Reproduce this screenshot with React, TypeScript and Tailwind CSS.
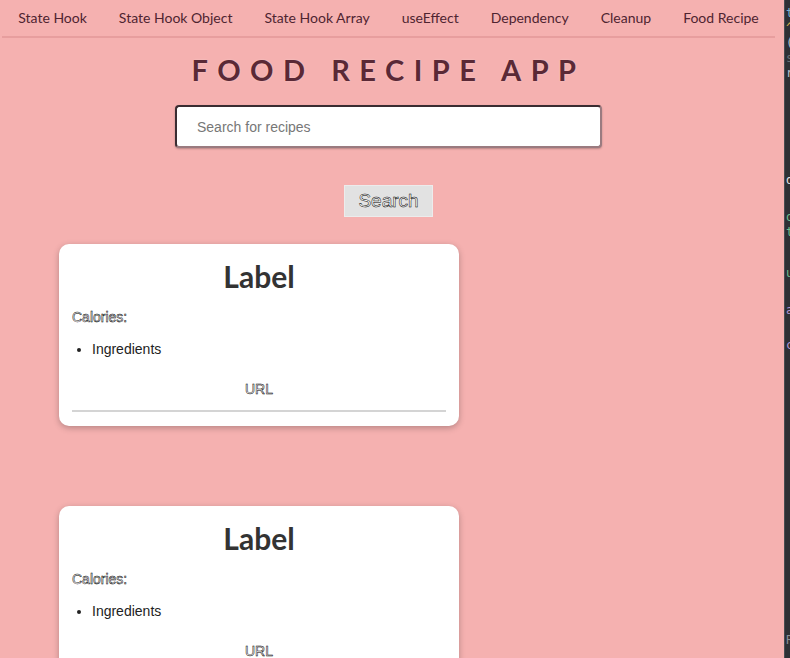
import React from "react";

const navLinks = [
  "State Hook",
  "State Hook Object",
  "State Hook Array",
  "useEffect",
  "Dependency",
  "Cleanup",
  "Food Recipe",
];

const outlined = "text-white [-webkit-text-stroke:0.5px_#000]";

function RecipeCard() {
  return (
    <div className="w-[400px] bg-white rounded-[10px] shadow-[0_2px_6px_rgba(0,0,0,0.25)] px-[13px] pt-[14px] pb-[14px] font-['Liberation_Sans',Arial,sans-serif]">
      <h2 className="text-center text-[30px] leading-[36px] font-bold text-[#333] font-['Lato',sans-serif]">
        Label
      </h2>
      <p className={`mt-[15px] text-[14px] leading-[16px] ${outlined}`}>Calories:</p>
      <ul className="mt-[16px] pl-5 list-disc text-[14px] leading-[16px] text-[#222]">
        <li>Ingredients</li>
      </ul>
      <p className={`mt-[24px] text-center text-[14px] leading-[16px] ${outlined}`}>URL</p>
      <hr className="mt-[13px] border-0 h-[2px] bg-[#d4d4d4]" />
    </div>
  );
}

function EditorStrip() {
  const bits = [
    { t: "t", c: "text-[#7fb3d5]", m: "mt-[6px]" },
    { t: "^", c: "text-[#d8b04a]", m: "mt-0" },
    { t: "(", c: "text-[#b9c3cf]", m: "mt-0" },
    { t: "s", c: "text-[#6b7078]", m: "mt-0" },
    { t: "r", c: "text-[#b9c3cf]", m: "mt-0" },
    { t: "d", c: "text-[#e6e6e6]", m: "mt-[92px]" },
    { t: "o", c: "text-[#6fbf8f]", m: "mt-[22px]" },
    { t: "t", c: "text-[#6fbf8f]", m: "mt-0" },
    { t: "u", c: "text-[#6fbf8f]", m: "mt-[26px]" },
    { t: "a", c: "text-[#b59ad8]", m: "mt-[22px]" },
    { t: "c", c: "text-[#b59ad8]", m: "mt-[20px]" },
    { t: "R", c: "text-[#8a8f96]", m: "mt-[280px]" },
  ];
  return (
    <div className="flex-1 h-full bg-[#2e3035] border-l border-[#4a4d52] overflow-hidden flex flex-col font-['DejaVu_Sans_Mono',monospace] text-[12px] leading-[15px]">
      {bits.map((b, i) => (
        <span key={i} className={`${b.m} ${b.c} pl-[1px]`}>
          {b.t}
        </span>
      ))}
    </div>
  );
}

export default function App() {
  return (
    <div className="w-[790px] h-[658px] flex overflow-hidden bg-[#f5b1b0]">
      <div className="w-[784px] flex-none h-full">
        <div className="w-[777px] flex flex-col items-center">
          <nav className="flex flex-none whitespace-nowrap border-b-2 border-[#e79e9e] font-['Lato',sans-serif] text-[14px] text-[#4f2430]">
            {navLinks.map((l) => (
              <a key={l} className="flex-none px-4 py-[8px] leading-[20px] cursor-pointer">
                {l}
              </a>
            ))}
          </nav>

          <h1 className="mt-[14px] text-[29px] leading-[35px] font-bold tracking-[9.5px] text-[#5a2936] font-['Lato',sans-serif] [text-shadow:0_0_2px_rgba(255,255,255,0.35)]">
            FOOD RECIPE APP
          </h1>

          <input
            type="text"
            placeholder="Search for recipes"
            className="mt-[18px] w-[427px] h-[43px] rounded-[4px] bg-white border-2 border-t-[#3a2d32] border-l-[#3a2d32] border-b-[#9a7b80] border-r-[#9a7b80] px-[20px] text-[14px] font-['Liberation_Sans',Arial,sans-serif] placeholder:text-[#777] shadow-[0_1px_2px_rgba(0,0,0,0.25)] outline-none"
          />

          <button
            className={`mt-[37px] w-[89px] h-[32px] bg-[#e2e2e2] border border-[#ececec] text-[19px] leading-[22px] font-['Liberation_Sans',Arial,sans-serif] ${outlined}`}
          >
            Search
          </button>
        </div>

        <div className="ml-[59px] mt-[27px] flex flex-col gap-[80px]">
          <RecipeCard />
          <RecipeCard />
        </div>
      </div>
      <EditorStrip />
    </div>
  );
}
